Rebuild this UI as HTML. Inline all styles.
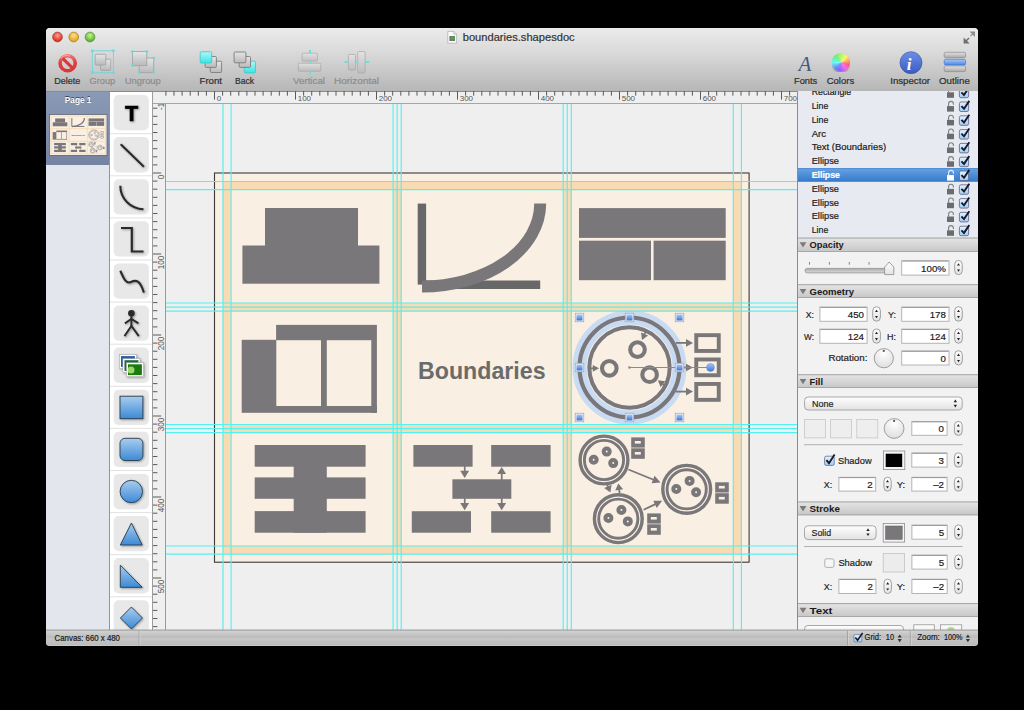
<!DOCTYPE html>
<html><head><meta charset="utf-8">
<style>
*{margin:0;padding:0;box-sizing:border-box}
html,body{width:1024px;height:710px;overflow:hidden;background:#000;font-family:"Liberation Sans",sans-serif}
.a{position:absolute}
#win{position:absolute;left:46px;top:28px;width:932px;height:618px;border-radius:4px 4px 4px 4px;overflow:hidden;background:#ececec}
#tb{position:absolute;left:0;top:0;width:932px;height:64px;background:linear-gradient(#ebebeb 0%,#d9d9d9 40%,#b6b6b6 100%);border-bottom:1px solid #8a8a8a}
.lbl{position:absolute;font-size:9.5px;color:#2a2a2a;white-space:nowrap;line-height:10px;text-shadow:0 1px 0 rgba(255,255,255,.45)}
.dis{color:#8a8a8a}
#side{position:absolute;left:0;top:64px;width:64px;height:538px;background:#e3e7ed}
#pagesel{position:absolute;left:0;top:0;width:64px;height:73px;background:linear-gradient(#8a9ab6,#7483a2)}
#tools{position:absolute;left:63px;top:64px;width:44px;height:538px;background:#fff;border-left:1px solid #8a95a8;border-right:1px solid #9c9c9c}
.tbtn{position:absolute;left:4px;width:35px;height:35px;border-radius:5px;background:#e8e8e8}
.tsep{position:absolute;left:0;width:42px;height:1px;background:#dedede}
#vr{position:absolute;left:107px;top:76px;width:13px;height:526px;background:#efefef;border-right:1px solid #9a9a9a}
#hr{position:absolute;left:107px;top:64px;width:644px;height:12px;background:#efefef;border-bottom:1px solid #a6a6a6}
#cv{position:absolute;left:120px;top:76px;width:631px;height:526px;background:#efefef;overflow:hidden}
#insp{position:absolute;left:751px;top:63px;width:181px;height:539px;background:#f1f1f1;border-left:1px solid #8f8f8f}
#status{position:absolute;left:0;top:602px;width:932px;height:16px;background:linear-gradient(#cfcfcf,#bcbcbc);border-top:1px solid #9a9a9a}
</style></head>
<body>
<div id="win">
  <div id="tb"></div>
  <div id="side"><div id="pagesel"></div></div>
  <div id="tools"></div>
  <div id="hr"></div>
  <div id="vr"></div>
</div>

<svg class="a" style="left:0;top:0" width="1024" height="710" viewBox="0 0 1024 710">
<defs>
<linearGradient id="bl" x1="0" y1="0" x2="0" y2="1"><stop offset="0" stop-color="#a9cdee"/><stop offset="1" stop-color="#3c8ad6"/></linearGradient>
<filter id="sh" x="-30%" y="-30%" width="160%" height="160%"><feGaussianBlur in="SourceAlpha" stdDeviation="0.9"/><feOffset dx="1" dy="1.2"/><feComponentTransfer><feFuncA type="linear" slope="0.35"/></feComponentTransfer><feMerge><feMergeNode/><feMergeNode in="SourceGraphic"/></feMerge></filter>
<clipPath id="toolclip"><rect x="110" y="91" width="42" height="539"/></clipPath>
<clipPath id="vrclip"><rect x="153" y="104" width="12" height="526"/></clipPath>
<clipPath id="hrclip"><rect x="165" y="91" width="632" height="13"/></clipPath>
</defs>
<g clip-path="url(#toolclip)">
<rect x="113.7" y="95.0" width="35.2" height="35.3" rx="5" fill="#e8e8e8"/>
<rect x="113.7" y="137.1" width="35.2" height="35.3" rx="5" fill="#e8e8e8"/>
<rect x="110" y="133.2" width="42" height="1" fill="#e2e2e2"/>
<rect x="113.7" y="179.2" width="35.2" height="35.3" rx="5" fill="#e8e8e8"/>
<rect x="110" y="175.3" width="42" height="1" fill="#e2e2e2"/>
<rect x="113.7" y="221.3" width="35.2" height="35.3" rx="5" fill="#e8e8e8"/>
<rect x="110" y="217.4" width="42" height="1" fill="#e2e2e2"/>
<rect x="113.7" y="263.4" width="35.2" height="35.3" rx="5" fill="#e8e8e8"/>
<rect x="110" y="259.5" width="42" height="1" fill="#e2e2e2"/>
<rect x="113.7" y="305.5" width="35.2" height="35.3" rx="5" fill="#e8e8e8"/>
<rect x="110" y="301.6" width="42" height="1" fill="#e2e2e2"/>
<rect x="113.7" y="347.6" width="35.2" height="35.3" rx="5" fill="#e8e8e8"/>
<rect x="110" y="343.7" width="42" height="1" fill="#e2e2e2"/>
<rect x="113.7" y="389.7" width="35.2" height="35.3" rx="5" fill="#e8e8e8"/>
<rect x="110" y="385.8" width="42" height="1" fill="#e2e2e2"/>
<rect x="113.7" y="431.8" width="35.2" height="35.3" rx="5" fill="#e8e8e8"/>
<rect x="110" y="427.9" width="42" height="1" fill="#e2e2e2"/>
<rect x="113.7" y="473.9" width="35.2" height="35.3" rx="5" fill="#e8e8e8"/>
<rect x="110" y="470.0" width="42" height="1" fill="#e2e2e2"/>
<rect x="113.7" y="516.0" width="35.2" height="35.3" rx="5" fill="#e8e8e8"/>
<rect x="110" y="512.1" width="42" height="1" fill="#e2e2e2"/>
<rect x="113.7" y="558.1" width="35.2" height="35.3" rx="5" fill="#e8e8e8"/>
<rect x="110" y="554.2" width="42" height="1" fill="#e2e2e2"/>
<rect x="113.7" y="600.2" width="35.2" height="35.3" rx="5" fill="#e8e8e8"/>
<rect x="110" y="596.3" width="42" height="1" fill="#e2e2e2"/>
<g filter="url(#sh)">
<text x="131.6" y="121.4" text-anchor="middle" font-family="Liberation Sans" font-weight="bold" font-size="21.5" fill="#000" stroke="#000" stroke-width="0.7">T</text>
<line x1="120.7" y1="144.2" x2="143.9" y2="166.8" stroke="#2b2b2b" stroke-width="2.1"/>
<path d="M120.3 185.8 A23.2 23.4 0 0 0 143.5 209.2" fill="none" stroke="#2b2b2b" stroke-width="2.1"/>
<path d="M121 228 L131.8 228 L131.8 251.5 L143.5 251.5" fill="none" stroke="#2b2b2b" stroke-width="2.2"/>
<path d="M120.3 270.8 C123.5 278, 126 284.5, 131 282 C136 279.5, 140 280, 143.9 292.6" fill="none" stroke="#2b2b2b" stroke-width="2.1"/>
<g stroke="#2b2b2b" stroke-width="1.9" fill="none"><line x1="131.4" y1="315" x2="131.4" y2="326"/><path d="M124.9 323.4 L131.4 319 L138.4 323.4"/><path d="M124.5 336.1 L131.4 326 L138.8 336.1"/></g><circle cx="131.4" cy="313.3" r="3.3" fill="#2b2b2b"/>
</g>
<g filter="url(#sh)">
<rect x="119.4" y="354.5" width="17.1" height="14" fill="#fff" stroke="#999" stroke-width="0.5"/>
<rect x="121.0" y="356.1" width="13.9" height="10.8" fill="#2a5ab0"/>
<rect x="122.9" y="358.6" width="17.1" height="14" fill="#fff" stroke="#999" stroke-width="0.5"/>
<rect x="124.5" y="360.2" width="13.9" height="10.8" fill="#1a6a3a"/>
<rect x="126.4" y="362.7" width="17.1" height="14" fill="#fff" stroke="#999" stroke-width="0.5"/>
<rect x="128.0" y="364.3" width="13.9" height="10.8" fill="#1a7a10"/>
<circle cx="131" cy="370" r="3.5" fill="#b8f080" opacity="0.8"/>
</g>
<rect x="120" y="396.2" width="22.9" height="22.5" stroke="#2a3a4a" stroke-width="0.9" fill="url(#bl)" filter="url(#sh)"/>
<rect x="120" y="438.3" width="22.9" height="22.2" rx="5" stroke="#2a3a4a" stroke-width="0.9" fill="url(#bl)" filter="url(#sh)"/>
<circle cx="131.3" cy="491.5" r="11.2" stroke="#2a3a4a" stroke-width="0.9" fill="url(#bl)" filter="url(#sh)"/>
<polygon points="131.4,523 142.2,545 120.3,545" stroke="#2a3a4a" stroke-width="0.9" fill="url(#bl)" filter="url(#sh)"/>
<polygon points="120.3,565.1 142.2,587.3 120.3,587.3" stroke="#2a3a4a" stroke-width="0.9" fill="url(#bl)" filter="url(#sh)"/>
<polygon points="131.4,607 142.4,618 131.4,629 120.4,618" stroke="#2a3a4a" stroke-width="0.9" fill="url(#bl)" filter="url(#sh)"/>
</g>
<g clip-path="url(#vrclip)">
<rect x="153" y="75.3" width="4.4" height="1" fill="#5a5a5a"/>
<rect x="153" y="83.4" width="4.4" height="1" fill="#5a5a5a"/>
<rect x="153" y="91.5" width="8.2" height="1" fill="#5a5a5a"/>
<rect x="153" y="99.6" width="4.4" height="1" fill="#5a5a5a"/>
<rect x="153" y="107.7" width="4.4" height="1" fill="#5a5a5a"/>
<rect x="153" y="115.8" width="4.4" height="1" fill="#5a5a5a"/>
<rect x="153" y="123.9" width="4.4" height="1" fill="#5a5a5a"/>
<rect x="153" y="132.0" width="4.4" height="1" fill="#5a5a5a"/>
<rect x="153" y="140.1" width="4.4" height="1" fill="#5a5a5a"/>
<rect x="153" y="148.2" width="4.4" height="1" fill="#5a5a5a"/>
<rect x="153" y="156.3" width="4.4" height="1" fill="#5a5a5a"/>
<rect x="153" y="164.4" width="4.4" height="1" fill="#5a5a5a"/>
<rect x="153" y="172.5" width="8.2" height="1" fill="#5a5a5a"/>
<rect x="153" y="180.6" width="4.4" height="1" fill="#5a5a5a"/>
<rect x="153" y="188.7" width="4.4" height="1" fill="#5a5a5a"/>
<rect x="153" y="196.8" width="4.4" height="1" fill="#5a5a5a"/>
<rect x="153" y="204.9" width="4.4" height="1" fill="#5a5a5a"/>
<rect x="153" y="213.0" width="4.4" height="1" fill="#5a5a5a"/>
<rect x="153" y="221.1" width="4.4" height="1" fill="#5a5a5a"/>
<rect x="153" y="229.2" width="4.4" height="1" fill="#5a5a5a"/>
<rect x="153" y="237.3" width="4.4" height="1" fill="#5a5a5a"/>
<rect x="153" y="245.4" width="4.4" height="1" fill="#5a5a5a"/>
<rect x="153" y="253.5" width="8.2" height="1" fill="#5a5a5a"/>
<rect x="153" y="261.6" width="4.4" height="1" fill="#5a5a5a"/>
<rect x="153" y="269.7" width="4.4" height="1" fill="#5a5a5a"/>
<rect x="153" y="277.8" width="4.4" height="1" fill="#5a5a5a"/>
<rect x="153" y="285.9" width="4.4" height="1" fill="#5a5a5a"/>
<rect x="153" y="294.0" width="4.4" height="1" fill="#5a5a5a"/>
<rect x="153" y="302.1" width="4.4" height="1" fill="#5a5a5a"/>
<rect x="153" y="310.2" width="4.4" height="1" fill="#5a5a5a"/>
<rect x="153" y="318.3" width="4.4" height="1" fill="#5a5a5a"/>
<rect x="153" y="326.4" width="4.4" height="1" fill="#5a5a5a"/>
<rect x="153" y="334.5" width="8.2" height="1" fill="#5a5a5a"/>
<rect x="153" y="342.6" width="4.4" height="1" fill="#5a5a5a"/>
<rect x="153" y="350.7" width="4.4" height="1" fill="#5a5a5a"/>
<rect x="153" y="358.8" width="4.4" height="1" fill="#5a5a5a"/>
<rect x="153" y="366.9" width="4.4" height="1" fill="#5a5a5a"/>
<rect x="153" y="375.0" width="4.4" height="1" fill="#5a5a5a"/>
<rect x="153" y="383.1" width="4.4" height="1" fill="#5a5a5a"/>
<rect x="153" y="391.2" width="4.4" height="1" fill="#5a5a5a"/>
<rect x="153" y="399.3" width="4.4" height="1" fill="#5a5a5a"/>
<rect x="153" y="407.4" width="4.4" height="1" fill="#5a5a5a"/>
<rect x="153" y="415.5" width="8.2" height="1" fill="#5a5a5a"/>
<rect x="153" y="423.6" width="4.4" height="1" fill="#5a5a5a"/>
<rect x="153" y="431.7" width="4.4" height="1" fill="#5a5a5a"/>
<rect x="153" y="439.8" width="4.4" height="1" fill="#5a5a5a"/>
<rect x="153" y="447.9" width="4.4" height="1" fill="#5a5a5a"/>
<rect x="153" y="456.0" width="4.4" height="1" fill="#5a5a5a"/>
<rect x="153" y="464.1" width="4.4" height="1" fill="#5a5a5a"/>
<rect x="153" y="472.2" width="4.4" height="1" fill="#5a5a5a"/>
<rect x="153" y="480.3" width="4.4" height="1" fill="#5a5a5a"/>
<rect x="153" y="488.4" width="4.4" height="1" fill="#5a5a5a"/>
<rect x="153" y="496.5" width="8.2" height="1" fill="#5a5a5a"/>
<rect x="153" y="504.6" width="4.4" height="1" fill="#5a5a5a"/>
<rect x="153" y="512.7" width="4.4" height="1" fill="#5a5a5a"/>
<rect x="153" y="520.8" width="4.4" height="1" fill="#5a5a5a"/>
<rect x="153" y="528.9" width="4.4" height="1" fill="#5a5a5a"/>
<rect x="153" y="537.0" width="4.4" height="1" fill="#5a5a5a"/>
<rect x="153" y="545.1" width="4.4" height="1" fill="#5a5a5a"/>
<rect x="153" y="553.2" width="4.4" height="1" fill="#5a5a5a"/>
<rect x="153" y="561.3" width="4.4" height="1" fill="#5a5a5a"/>
<rect x="153" y="569.4" width="4.4" height="1" fill="#5a5a5a"/>
<rect x="153" y="577.5" width="8.2" height="1" fill="#5a5a5a"/>
<rect x="153" y="585.6" width="4.4" height="1" fill="#5a5a5a"/>
<rect x="153" y="593.7" width="4.4" height="1" fill="#5a5a5a"/>
<rect x="153" y="601.8" width="4.4" height="1" fill="#5a5a5a"/>
<rect x="153" y="609.9" width="4.4" height="1" fill="#5a5a5a"/>
<rect x="153" y="618.0" width="4.4" height="1" fill="#5a5a5a"/>
<rect x="153" y="626.1" width="4.4" height="1" fill="#5a5a5a"/>
<rect x="153" y="634.2" width="4.4" height="1" fill="#5a5a5a"/>
<rect x="153" y="642.3" width="4.4" height="1" fill="#5a5a5a"/>
<rect x="153" y="650.4" width="4.4" height="1" fill="#5a5a5a"/>
<text transform="translate(164.3,93.6) rotate(-90)" text-anchor="end" font-family="Liberation Sans" font-size="8.2" fill="#555">-100</text>
<text transform="translate(164.3,174.6) rotate(-90)" text-anchor="end" font-family="Liberation Sans" font-size="8.2" fill="#555">0</text>
<text transform="translate(164.3,255.6) rotate(-90)" text-anchor="end" font-family="Liberation Sans" font-size="8.2" fill="#555">100</text>
<text transform="translate(164.3,336.6) rotate(-90)" text-anchor="end" font-family="Liberation Sans" font-size="8.2" fill="#555">200</text>
<text transform="translate(164.3,417.6) rotate(-90)" text-anchor="end" font-family="Liberation Sans" font-size="8.2" fill="#555">300</text>
<text transform="translate(164.3,498.6) rotate(-90)" text-anchor="end" font-family="Liberation Sans" font-size="8.2" fill="#555">400</text>
<text transform="translate(164.3,579.6) rotate(-90)" text-anchor="end" font-family="Liberation Sans" font-size="8.2" fill="#555">500</text>
</g>
<g clip-path="url(#hrclip)">
<rect x="149.2" y="91" width="1" height="4.7" fill="#5a5a5a"/>
<rect x="157.3" y="91" width="1" height="4.7" fill="#5a5a5a"/>
<rect x="165.4" y="91" width="1" height="4.7" fill="#5a5a5a"/>
<rect x="173.5" y="91" width="1" height="4.7" fill="#5a5a5a"/>
<rect x="181.6" y="91" width="1" height="4.7" fill="#5a5a5a"/>
<rect x="189.7" y="91" width="1" height="4.7" fill="#5a5a5a"/>
<rect x="197.8" y="91" width="1" height="4.7" fill="#5a5a5a"/>
<rect x="205.9" y="91" width="1" height="4.7" fill="#5a5a5a"/>
<rect x="214.0" y="91" width="1" height="8.6" fill="#5a5a5a"/>
<text x="216.7" y="101.4" font-family="Liberation Sans" font-size="8" fill="#555">0</text>
<rect x="222.1" y="91" width="1" height="4.7" fill="#5a5a5a"/>
<rect x="230.2" y="91" width="1" height="4.7" fill="#5a5a5a"/>
<rect x="238.3" y="91" width="1" height="4.7" fill="#5a5a5a"/>
<rect x="246.4" y="91" width="1" height="4.7" fill="#5a5a5a"/>
<rect x="254.5" y="91" width="1" height="4.7" fill="#5a5a5a"/>
<rect x="262.6" y="91" width="1" height="4.7" fill="#5a5a5a"/>
<rect x="270.7" y="91" width="1" height="4.7" fill="#5a5a5a"/>
<rect x="278.8" y="91" width="1" height="4.7" fill="#5a5a5a"/>
<rect x="286.9" y="91" width="1" height="4.7" fill="#5a5a5a"/>
<rect x="295.0" y="91" width="1" height="8.6" fill="#5a5a5a"/>
<text x="297.7" y="101.4" font-family="Liberation Sans" font-size="8" fill="#555">100</text>
<rect x="303.1" y="91" width="1" height="4.7" fill="#5a5a5a"/>
<rect x="311.2" y="91" width="1" height="4.7" fill="#5a5a5a"/>
<rect x="319.3" y="91" width="1" height="4.7" fill="#5a5a5a"/>
<rect x="327.4" y="91" width="1" height="4.7" fill="#5a5a5a"/>
<rect x="335.5" y="91" width="1" height="4.7" fill="#5a5a5a"/>
<rect x="343.6" y="91" width="1" height="4.7" fill="#5a5a5a"/>
<rect x="351.7" y="91" width="1" height="4.7" fill="#5a5a5a"/>
<rect x="359.8" y="91" width="1" height="4.7" fill="#5a5a5a"/>
<rect x="367.9" y="91" width="1" height="4.7" fill="#5a5a5a"/>
<rect x="376.0" y="91" width="1" height="8.6" fill="#5a5a5a"/>
<text x="378.7" y="101.4" font-family="Liberation Sans" font-size="8" fill="#555">200</text>
<rect x="384.1" y="91" width="1" height="4.7" fill="#5a5a5a"/>
<rect x="392.2" y="91" width="1" height="4.7" fill="#5a5a5a"/>
<rect x="400.3" y="91" width="1" height="4.7" fill="#5a5a5a"/>
<rect x="408.4" y="91" width="1" height="4.7" fill="#5a5a5a"/>
<rect x="416.5" y="91" width="1" height="4.7" fill="#5a5a5a"/>
<rect x="424.6" y="91" width="1" height="4.7" fill="#5a5a5a"/>
<rect x="432.7" y="91" width="1" height="4.7" fill="#5a5a5a"/>
<rect x="440.8" y="91" width="1" height="4.7" fill="#5a5a5a"/>
<rect x="448.9" y="91" width="1" height="4.7" fill="#5a5a5a"/>
<rect x="457.0" y="91" width="1" height="8.6" fill="#5a5a5a"/>
<text x="459.7" y="101.4" font-family="Liberation Sans" font-size="8" fill="#555">300</text>
<rect x="465.1" y="91" width="1" height="4.7" fill="#5a5a5a"/>
<rect x="473.2" y="91" width="1" height="4.7" fill="#5a5a5a"/>
<rect x="481.3" y="91" width="1" height="4.7" fill="#5a5a5a"/>
<rect x="489.4" y="91" width="1" height="4.7" fill="#5a5a5a"/>
<rect x="497.5" y="91" width="1" height="4.7" fill="#5a5a5a"/>
<rect x="505.6" y="91" width="1" height="4.7" fill="#5a5a5a"/>
<rect x="513.7" y="91" width="1" height="4.7" fill="#5a5a5a"/>
<rect x="521.8" y="91" width="1" height="4.7" fill="#5a5a5a"/>
<rect x="529.9" y="91" width="1" height="4.7" fill="#5a5a5a"/>
<rect x="538.0" y="91" width="1" height="8.6" fill="#5a5a5a"/>
<text x="540.7" y="101.4" font-family="Liberation Sans" font-size="8" fill="#555">400</text>
<rect x="546.1" y="91" width="1" height="4.7" fill="#5a5a5a"/>
<rect x="554.2" y="91" width="1" height="4.7" fill="#5a5a5a"/>
<rect x="562.3" y="91" width="1" height="4.7" fill="#5a5a5a"/>
<rect x="570.4" y="91" width="1" height="4.7" fill="#5a5a5a"/>
<rect x="578.5" y="91" width="1" height="4.7" fill="#5a5a5a"/>
<rect x="586.6" y="91" width="1" height="4.7" fill="#5a5a5a"/>
<rect x="594.7" y="91" width="1" height="4.7" fill="#5a5a5a"/>
<rect x="602.8" y="91" width="1" height="4.7" fill="#5a5a5a"/>
<rect x="610.9" y="91" width="1" height="4.7" fill="#5a5a5a"/>
<rect x="619.0" y="91" width="1" height="8.6" fill="#5a5a5a"/>
<text x="621.7" y="101.4" font-family="Liberation Sans" font-size="8" fill="#555">500</text>
<rect x="627.1" y="91" width="1" height="4.7" fill="#5a5a5a"/>
<rect x="635.2" y="91" width="1" height="4.7" fill="#5a5a5a"/>
<rect x="643.3" y="91" width="1" height="4.7" fill="#5a5a5a"/>
<rect x="651.4" y="91" width="1" height="4.7" fill="#5a5a5a"/>
<rect x="659.5" y="91" width="1" height="4.7" fill="#5a5a5a"/>
<rect x="667.6" y="91" width="1" height="4.7" fill="#5a5a5a"/>
<rect x="675.7" y="91" width="1" height="4.7" fill="#5a5a5a"/>
<rect x="683.8" y="91" width="1" height="4.7" fill="#5a5a5a"/>
<rect x="691.9" y="91" width="1" height="4.7" fill="#5a5a5a"/>
<rect x="700.0" y="91" width="1" height="8.6" fill="#5a5a5a"/>
<text x="702.7" y="101.4" font-family="Liberation Sans" font-size="8" fill="#555">600</text>
<rect x="708.1" y="91" width="1" height="4.7" fill="#5a5a5a"/>
<rect x="716.2" y="91" width="1" height="4.7" fill="#5a5a5a"/>
<rect x="724.3" y="91" width="1" height="4.7" fill="#5a5a5a"/>
<rect x="732.4" y="91" width="1" height="4.7" fill="#5a5a5a"/>
<rect x="740.5" y="91" width="1" height="4.7" fill="#5a5a5a"/>
<rect x="748.6" y="91" width="1" height="4.7" fill="#5a5a5a"/>
<rect x="756.7" y="91" width="1" height="4.7" fill="#5a5a5a"/>
<rect x="764.8" y="91" width="1" height="4.7" fill="#5a5a5a"/>
<rect x="772.9" y="91" width="1" height="4.7" fill="#5a5a5a"/>
<rect x="781.0" y="91" width="1" height="8.6" fill="#5a5a5a"/>
<text x="783.7" y="101.4" font-family="Liberation Sans" font-size="8" fill="#555">700</text>
<rect x="789.1" y="91" width="1" height="4.7" fill="#5a5a5a"/>
<rect x="797.2" y="91" width="1" height="4.7" fill="#5a5a5a"/>
<rect x="805.3" y="91" width="1" height="4.7" fill="#5a5a5a"/>
<rect x="813.4" y="91" width="1" height="4.7" fill="#5a5a5a"/>
<rect x="821.5" y="91" width="1" height="4.7" fill="#5a5a5a"/>
<rect x="829.6" y="91" width="1" height="4.7" fill="#5a5a5a"/>
<rect x="837.7" y="91" width="1" height="4.7" fill="#5a5a5a"/>
<rect x="845.8" y="91" width="1" height="4.7" fill="#5a5a5a"/>
<rect x="853.9" y="91" width="1" height="4.7" fill="#5a5a5a"/>
</g>
</svg>
<svg class="a" style="left:0;top:0" width="1024" height="710" viewBox="0 0 1024 710">
<defs><clipPath id="cc"><rect x="166" y="104" width="631" height="526"/></clipPath><linearGradient id="hb" x1="0" y1="0" x2="0" y2="1"><stop offset="0" stop-color="#a9c8f6"/><stop offset="1" stop-color="#3b74d8"/></linearGradient></defs>
<rect x="166" y="104" width="631" height="526" fill="#efefef"/>
<g clip-path="url(#cc)">
<g id="doc"><rect x="214.50" y="173.00" width="534.60" height="389.20" fill="#f9efe2" stroke="#3a3a3a" stroke-width="1.1"/>
<rect x="223.00" y="181.50" width="518.40" height="372.60" fill="#f8dab3"/>
<rect x="231.10" y="189.60" width="162.00" height="113.40" fill="#f9efe2"/>
<rect x="231.10" y="311.10" width="162.00" height="113.40" fill="#f9efe2"/>
<rect x="231.10" y="432.60" width="162.00" height="113.40" fill="#f9efe2"/>
<rect x="401.20" y="189.60" width="162.00" height="113.40" fill="#f9efe2"/>
<rect x="401.20" y="311.10" width="162.00" height="113.40" fill="#f9efe2"/>
<rect x="401.20" y="432.60" width="162.00" height="113.40" fill="#f9efe2"/>
<rect x="571.30" y="189.60" width="162.00" height="113.40" fill="#f9efe2"/>
<rect x="571.30" y="311.10" width="162.00" height="113.40" fill="#f9efe2"/>
<rect x="571.30" y="432.60" width="162.00" height="113.40" fill="#f9efe2"/>
<g fill="#7a777a">
<!-- cell1 -->
<rect x="265" y="208" width="93" height="38"/>
<rect x="242.4" y="245.5" width="137" height="38.2"/>
<!-- cell3 -->
<rect x="579" y="208.1" width="146.7" height="29.8"/>
<rect x="579" y="240.7" width="72" height="39.5"/>
<rect x="653.6" y="240.7" width="72.1" height="39.5"/>
<!-- cell4 -->
<rect x="276.1" y="324.9" width="100.8" height="15.3"/>
<rect x="241.7" y="339.8" width="34.6" height="73"/>
<rect x="371.3" y="340" width="5.6" height="72.8"/>
<rect x="276" y="406" width="101" height="6.8"/>
<rect x="321" y="340" width="5.8" height="66.2"/>
<!-- cell7 -->
<rect x="254.7" y="445" width="110.9" height="21.7"/>
<rect x="254.7" y="477.4" width="110.9" height="21.4"/>
<rect x="254.7" y="511.1" width="110.9" height="21.6"/>
<rect x="293.7" y="445" width="33.1" height="87.7"/>
<!-- cell8 -->
<rect x="413.4" y="445" width="59.2" height="21.7"/>
<rect x="491.2" y="445" width="59.4" height="21.7"/>
<rect x="452.4" y="479.3" width="58.9" height="19.5"/>
<rect x="411.8" y="511.2" width="59.2" height="21.5"/>
<rect x="491.2" y="511.2" width="59.4" height="21.5"/>
<rect x="463.9" y="466" width="1.7" height="6"/>
<polygon points="460.2,470.8 469.1,470.8 464.7,478.1"/>
<rect x="500.9" y="473" width="1.7" height="7"/>
<polygon points="497.2,474 506.1,474 501.7,467"/>
<rect x="463.9" y="498" width="1.7" height="6"/>
<polygon points="460.2,503 469.1,503 464.7,510.3"/>
<rect x="500.9" y="498" width="1.7" height="6"/>
<polygon points="497.2,503 506.1,503 501.7,510.3"/>
</g>
<!-- cell2 -->
<rect x="417.7" y="203.6" width="8.4" height="81" fill="#686868"/>
<rect x="422" y="280.5" width="118.2" height="8.5" fill="#686868"/>
<path d="M540.2 203.6 A118.2 82.9 0 0 1 422 286.5" fill="none" stroke="#7a777a" stroke-width="12"/>
<!-- cell5 -->
<text x="418" y="378.8" font-family="Liberation Sans" font-weight="bold" font-size="23.2" fill="#6b6b6b">Boundaries</text>
</g>
<circle cx="629.5" cy="367.5" r="50" fill="none" stroke="#c8dbf2" stroke-width="14"/>
<g id="doc2"><circle cx="629.5" cy="367.5" r="50" fill="none" stroke="#7a777a" stroke-width="4.2"/>
<circle cx="629.5" cy="367.5" r="40.2" fill="#f9efe2" stroke="#7a777a" stroke-width="4"/>
<circle cx="637.5" cy="349.6" r="7.3" fill="none" stroke="#7a777a" stroke-width="4.1"/>
<circle cx="609.3" cy="368.3" r="7.3" fill="none" stroke="#7a777a" stroke-width="4.1"/>
<circle cx="649.6" cy="374.7" r="7.3" fill="none" stroke="#7a777a" stroke-width="4.1"/>
<line x1="590.80" y1="368.30" x2="593.30" y2="368.30" stroke="#7a777a" stroke-width="1.8"/><polygon fill="#7a777a" points="599.00,368.30 592.80,371.70 592.80,364.90"/>
<line x1="646.50" y1="329.50" x2="644.36" y2="334.49" stroke="#7a777a" stroke-width="1.8"/><polygon fill="#7a777a" points="642.00,340.00 641.07,332.53 648.05,335.52"/>
<line x1="664.50" y1="385.50" x2="662.58" y2="383.96" stroke="#7a777a" stroke-width="1.8"/><polygon fill="#7a777a" points="657.90,380.20 665.35,381.31 660.59,387.23"/>
<rect x="696.25" y="335.15" width="22.5" height="15.80" fill="none" stroke="#7a777a" stroke-width="3.9"/>
<rect x="696.25" y="359.45" width="22.5" height="15.80" fill="none" stroke="#7a777a" stroke-width="3.9"/>
<rect x="696.25" y="383.95" width="22.5" height="15.90" fill="none" stroke="#7a777a" stroke-width="3.9"/>
<line x1="675.80" y1="342.90" x2="686.50" y2="342.90" stroke="#7a777a" stroke-width="1.8"/><polygon fill="#7a777a" points="693.00,342.90 686.00,346.70 686.00,339.10"/>
<line x1="675.80" y1="367.50" x2="686.50" y2="367.50" stroke="#7a777a" stroke-width="1.8"/><polygon fill="#7a777a" points="693.00,367.50 686.00,371.30 686.00,363.70"/>
<line x1="675.80" y1="391.60" x2="686.50" y2="391.60" stroke="#7a777a" stroke-width="1.8"/><polygon fill="#7a777a" points="693.00,391.60 686.00,395.40 686.00,387.80"/>
<circle cx="604" cy="460" r="23.9" fill="none" stroke="#7a777a" stroke-width="3.4"/><circle cx="604" cy="460" r="19.6" fill="none" stroke="#7a777a" stroke-width="2.9"/><circle cx="606.7" cy="451.6" r="3.0" fill="none" stroke="#7a777a" stroke-width="4.0"/><circle cx="593.7" cy="459.7" r="3.0" fill="none" stroke="#7a777a" stroke-width="4.0"/><circle cx="613.2" cy="463.1" r="3.0" fill="none" stroke="#7a777a" stroke-width="4.0"/><rect x="631.2" y="437.4" width="13.6" height="10.2" fill="#7a777a"/><rect x="631.2" y="448.3" width="13.6" height="10.5" fill="#7a777a"/><rect x="634.8" y="441.0" width="6" height="2.6" fill="#f9efe2"/><rect x="634.8" y="452.0" width="6" height="2.6" fill="#f9efe2"/>
<circle cx="686.7" cy="489.3" r="23.9" fill="none" stroke="#7a777a" stroke-width="3.4"/><circle cx="686.7" cy="489.3" r="19.6" fill="none" stroke="#7a777a" stroke-width="2.9"/><circle cx="689.6" cy="480.9" r="3.0" fill="none" stroke="#7a777a" stroke-width="4.0"/><circle cx="676.3" cy="489" r="3.0" fill="none" stroke="#7a777a" stroke-width="4.0"/><circle cx="696.1" cy="492.2" r="3.0" fill="none" stroke="#7a777a" stroke-width="4.0"/><rect x="715.2" y="482.3" width="13.6" height="10.2" fill="#7a777a"/><rect x="715.2" y="493.2" width="13.6" height="10.5" fill="#7a777a"/><rect x="718.8" y="485.9" width="6" height="2.6" fill="#f9efe2"/><rect x="718.8" y="496.9" width="6" height="2.6" fill="#f9efe2"/>
<circle cx="618.3" cy="518.7" r="23.9" fill="none" stroke="#7a777a" stroke-width="3.4"/><circle cx="618.3" cy="518.7" r="19.6" fill="none" stroke="#7a777a" stroke-width="2.9"/><circle cx="621.4" cy="510" r="3.0" fill="none" stroke="#7a777a" stroke-width="4.0"/><circle cx="608.4" cy="518" r="3.0" fill="none" stroke="#7a777a" stroke-width="4.0"/><circle cx="627.8" cy="521.4" r="3.0" fill="none" stroke="#7a777a" stroke-width="4.0"/><rect x="647.2" y="513.4" width="13.6" height="10.2" fill="#7a777a"/><rect x="647.2" y="524.3" width="13.6" height="10.5" fill="#7a777a"/><rect x="650.8" y="517.0" width="6" height="2.6" fill="#f9efe2"/><rect x="650.8" y="528.0" width="6" height="2.6" fill="#f9efe2"/>
<line x1="628.40" y1="469.50" x2="653.56" y2="479.77" stroke="#7a777a" stroke-width="1.8"/><polygon fill="#7a777a" points="660.50,482.60 651.58,483.28 654.60,475.87"/>
<line x1="643.60" y1="509.80" x2="655.45" y2="504.07" stroke="#7a777a" stroke-width="1.8"/><polygon fill="#7a777a" points="662.20,500.80 656.74,507.89 653.26,500.68"/>
<line x1="606.00" y1="482.00" x2="608.06" y2="486.87" stroke="#7a777a" stroke-width="1.8"/><polygon fill="#7a777a" points="610.40,492.40 604.18,487.97 611.55,484.86"/>
<line x1="619.60" y1="493.00" x2="619.11" y2="489.35" stroke="#7a777a" stroke-width="1.8"/><polygon fill="#7a777a" points="618.30,483.40 623.14,489.30 615.21,490.38"/></g>
<line x1="629.5" y1="367.5" x2="710.5" y2="367.5" stroke="#8a8a8a" stroke-width="1"/>
<circle cx="629.5" cy="367.5" r="1.3" fill="#8a8a8a"/>
<circle cx="710.5" cy="367.5" r="3.9" fill="url(#hb)" stroke="#6a8fd0" stroke-width="0.6"/>
<rect x="575.2" y="313.2" width="8.6" height="8.6" fill="#f2f2f2" stroke="#9a9a9a" stroke-width="0.6"/>
<rect x="576.5" y="314.5" width="6" height="6" fill="url(#hb)"/>
<rect x="575.2" y="363.2" width="8.6" height="8.6" fill="#f2f2f2" stroke="#9a9a9a" stroke-width="0.6"/>
<rect x="576.5" y="364.5" width="6" height="6" fill="url(#hb)"/>
<rect x="575.2" y="413.2" width="8.6" height="8.6" fill="#f2f2f2" stroke="#9a9a9a" stroke-width="0.6"/>
<rect x="576.5" y="414.5" width="6" height="6" fill="url(#hb)"/>
<rect x="625.2" y="313.2" width="8.6" height="8.6" fill="#f2f2f2" stroke="#9a9a9a" stroke-width="0.6"/>
<rect x="626.5" y="314.5" width="6" height="6" fill="url(#hb)"/>
<rect x="625.2" y="413.2" width="8.6" height="8.6" fill="#f2f2f2" stroke="#9a9a9a" stroke-width="0.6"/>
<rect x="626.5" y="414.5" width="6" height="6" fill="url(#hb)"/>
<rect x="675.2" y="313.2" width="8.6" height="8.6" fill="#f2f2f2" stroke="#9a9a9a" stroke-width="0.6"/>
<rect x="676.5" y="314.5" width="6" height="6" fill="url(#hb)"/>
<rect x="675.2" y="363.2" width="8.6" height="8.6" fill="#f2f2f2" stroke="#9a9a9a" stroke-width="0.6"/>
<rect x="676.5" y="364.5" width="6" height="6" fill="url(#hb)"/>
<rect x="675.2" y="413.2" width="8.6" height="8.6" fill="#f2f2f2" stroke="#9a9a9a" stroke-width="0.6"/>
<rect x="676.5" y="414.5" width="6" height="6" fill="url(#hb)"/>
<g stroke="#55f0f0" stroke-width="1.15"><line x1="223.00" y1="104" x2="223.00" y2="630"/>
<line x1="231.10" y1="104" x2="231.10" y2="630"/>
<line x1="393.10" y1="104" x2="393.10" y2="630"/>
<line x1="397.15" y1="104" x2="397.15" y2="630"/>
<line x1="401.20" y1="104" x2="401.20" y2="630"/>
<line x1="563.20" y1="104" x2="563.20" y2="630"/>
<line x1="567.25" y1="104" x2="567.25" y2="630"/>
<line x1="571.30" y1="104" x2="571.30" y2="630"/>
<line x1="733.30" y1="104" x2="733.30" y2="630"/>
<line x1="741.40" y1="104" x2="741.40" y2="630"/>
<line x1="166" y1="181.50" x2="797" y2="181.50"/>
<line x1="166" y1="189.60" x2="797" y2="189.60"/>
<line x1="166" y1="303.00" x2="797" y2="303.00"/>
<line x1="166" y1="307.05" x2="797" y2="307.05"/>
<line x1="166" y1="311.10" x2="797" y2="311.10"/>
<line x1="166" y1="424.50" x2="797" y2="424.50"/>
<line x1="166" y1="428.55" x2="797" y2="428.55"/>
<line x1="166" y1="432.60" x2="797" y2="432.60"/>
<line x1="166" y1="546.00" x2="797" y2="546.00"/>
<line x1="166" y1="554.10" x2="797" y2="554.10"/></g>
</g></svg>
<svg class="a" style="left:0;top:0" width="1024" height="710" viewBox="0 0 1024 710">
<text x="64.8" y="102.8" font-family="Liberation Sans" font-weight="bold" font-size="8.6" fill="#fff" textLength="26.6" lengthAdjust="spacingAndGlyphs" style="text-shadow:0 -0.5px 0.6px rgba(0,0,0,.55)">Page 1</text>
<rect x="49.6" y="114.6" width="57.2" height="40.6" fill="#f9efe2" stroke="#4c5a74" stroke-width="0.9"/>
<defs><filter id="thk" x="0" y="0" width="1" height="1" filterUnits="objectBoundingBox"><feMorphology operator="erode" radius="6"/></filter></defs><g transform="translate(49.8,114.8) scale(0.1063,0.1035) translate(-214.5,-173)"><use href="#doc"/><use href="#doc2"/></g>
</svg>

<svg class="a" style="left:0;top:0" width="1024" height="92" viewBox="0 0 1024 92">
<defs>
<linearGradient id="gq" x1="0" y1="0" x2="0" y2="1"><stop offset="0" stop-color="#e6e6e6"/><stop offset="1" stop-color="#b9b9b9"/></linearGradient>
<linearGradient id="cq" x1="0" y1="0" x2="0" y2="1"><stop offset="0" stop-color="#b4f6f6"/><stop offset="1" stop-color="#35e6e6"/></linearGradient>
<linearGradient id="red" x1="0" y1="0" x2="0" y2="1"><stop offset="0" stop-color="#f07070"/><stop offset="0.5" stop-color="#de3c3c"/><stop offset="1" stop-color="#d83838"/></linearGradient>
<radialGradient id="tl_r" cx="0.5" cy="0.35" r="0.6"><stop offset="0" stop-color="#ff9c8c"/><stop offset="1" stop-color="#d8281e"/></radialGradient>
<radialGradient id="tl_y" cx="0.5" cy="0.35" r="0.6"><stop offset="0" stop-color="#ffe08a"/><stop offset="1" stop-color="#e2a01c"/></radialGradient>
<radialGradient id="tl_g" cx="0.5" cy="0.35" r="0.6"><stop offset="0" stop-color="#c8f29a"/><stop offset="1" stop-color="#5aae2a"/></radialGradient>
<linearGradient id="ib" x1="0" y1="0" x2="0" y2="1"><stop offset="0" stop-color="#6c8fe8"/><stop offset="1" stop-color="#3a5cc0"/></linearGradient>
<linearGradient id="ob" x1="0" y1="0" x2="0" y2="1"><stop offset="0" stop-color="#e2e2e2"/><stop offset="1" stop-color="#a9a9a9"/></linearGradient>
<linearGradient id="obb" x1="0" y1="0" x2="0" y2="1"><stop offset="0" stop-color="#a8c8f8"/><stop offset="1" stop-color="#4a86e6"/></linearGradient>
</defs>
<!-- traffic lights -->
<circle cx="57.5" cy="37" r="4.9" fill="url(#tl_r)" stroke="#9a3a30" stroke-width="0.6"/>
<circle cx="73.7" cy="37" r="4.9" fill="url(#tl_y)" stroke="#a07020" stroke-width="0.6"/>
<circle cx="90" cy="37" r="4.9" fill="url(#tl_g)" stroke="#4a8a2a" stroke-width="0.6"/>
<!-- title -->
<path d="M447.8 31.4 L453.8 31.4 L456.6 34.2 L456.6 43.2 L447.8 43.2 Z" fill="#fafafa" stroke="#a0a0a0" stroke-width="0.6"/>
<path d="M453.8 31.4 L453.8 34.2 L456.6 34.2" fill="#e0e0e0" stroke="#a0a0a0" stroke-width="0.5"/>
<rect x="449.4" y="36" width="5.6" height="5" fill="#4a4a4a" opacity="0.75"/>
<circle cx="452.8" cy="38" r="1.9" fill="#3cb030"/>
<text x="462.7" y="40.9" font-family="Liberation Sans" font-size="11.15" fill="#333" stroke="#333" stroke-width="0.2" textLength="112" lengthAdjust="spacingAndGlyphs">boundaries.shapesdoc</text>
<!-- resize widget -->
<polygon points="963.6,43.4 963.6,37.4 969.6,43.4" fill="#6e6e6e"/><line x1="965.5" y1="41.5" x2="969" y2="38" stroke="#6e6e6e" stroke-width="1.4"/>
<polygon points="975,31.6 975,37 969.6,31.6" fill="#8a8a8a"/><line x1="973.3" y1="33.3" x2="970.5" y2="36.1" stroke="#8a8a8a" stroke-width="1.2"/>
<!-- delete -->
<circle cx="67.65" cy="63.25" r="7.6" fill="none" stroke="url(#red)" stroke-width="3.5"/>
<line x1="62.2" y1="57.8" x2="73.1" y2="68.7" stroke="#d83a3a" stroke-width="3.2"/>
<path d="M61 59 A7.6 7.6 0 0 1 70 56" fill="none" stroke="#ffb0b0" stroke-width="1.1" opacity="0.7"/>
<!-- group -->
<rect x="100.5" y="59.2" width="10.2" height="11.2" fill="url(#gq)" stroke="#a0a0a0" stroke-width="0.8" rx="0.8"/>
<rect x="95.2" y="54.3" width="10.6" height="10.8" fill="url(#gq)" stroke="#a0a0a0" stroke-width="0.8" rx="0.8"/>
<rect x="92.3" y="50.8" width="21.1" height="21.9" fill="none" stroke="#6ad8d8" stroke-width="0.9"/>
<g fill="#6ad8d8"><circle cx="92.3" cy="50.8" r="1.4"/><circle cx="113.4" cy="50.8" r="1.4"/><circle cx="92.3" cy="72.7" r="1.4"/><circle cx="113.4" cy="72.7" r="1.4"/></g>
<!-- ungroup -->
<rect x="139.2" y="58.1" width="14.6" height="14.6" fill="url(#gq)" stroke="#a0a0a0" stroke-width="0.8"/>
<rect x="132.5" y="51.6" width="14.3" height="14.1" fill="url(#gq)" stroke="#a0a0a0" stroke-width="0.8"/>
<g fill="#6ad8d8"><circle cx="132.5" cy="51.6" r="1.4"/><circle cx="146.8" cy="51.6" r="1.4"/><circle cx="132.5" cy="65.7" r="1.4"/><circle cx="153.8" cy="58.1" r="1.4"/><circle cx="139.2" cy="72.7" r="1.4"/><circle cx="153.8" cy="72.7" r="1.4"/></g>
<!-- front -->
<rect x="210.3" y="61.2" width="11.3" height="11.3" rx="1" fill="url(#gq)" stroke="#7c7c7c" stroke-width="0.9"/>
<rect x="205.2" y="56.5" width="11.2" height="10.9" rx="1" fill="url(#gq)" stroke="#7c7c7c" stroke-width="0.9"/>
<rect x="200.2" y="51.8" width="11.5" height="11.2" rx="1" fill="url(#cq)" stroke="#48c8c8" stroke-width="0.9"/>
<!-- back -->
<rect x="244.3" y="61.2" width="11.2" height="11.7" rx="1" fill="url(#cq)" stroke="#48c8c8" stroke-width="0.9"/>
<rect x="239.2" y="56.5" width="11.3" height="10.9" rx="1" fill="url(#gq)" stroke="#7c7c7c" stroke-width="0.9"/>
<rect x="234.1" y="52" width="11.8" height="10.8" rx="1" fill="url(#gq)" stroke="#7c7c7c" stroke-width="0.9"/>
<!-- vertical -->
<g stroke="#9e9e9e" stroke-width="0.8" fill="url(#gq)" opacity="0.75">
<rect x="302.1" y="53.2" width="15.3" height="7.9" rx="1"/>
<rect x="298.3" y="63.2" width="22.5" height="8" rx="1"/>
<rect x="348.4" y="54.4" width="7.1" height="15.8" rx="1"/>
<rect x="357.7" y="51.5" width="7.4" height="21.5" rx="1"/>
</g>
<g stroke="#6ae0e0" stroke-width="2">
<line x1="310" y1="50" x2="310" y2="53.2"/><line x1="310" y1="61.3" x2="310" y2="63.2"/><line x1="310" y1="71.3" x2="310" y2="74.8"/>
<line x1="344.5" y1="62" x2="348.3" y2="62"/><line x1="355.6" y1="62" x2="357.7" y2="62"/><line x1="365.2" y1="62" x2="369.1" y2="62"/>
</g>
<!-- fonts -->
<text x="798.5" y="71" font-family="Liberation Serif" font-style="italic" font-size="21" fill="#3f5a7e">A</text>
<!-- colors -->
<foreignObject x="831.8" y="53.4" width="18.4" height="18.4"><div style="width:18.4px;height:18.4px;border-radius:50%;background:conic-gradient(from 0deg,#a8f860,#f8f868 40deg,#ff9a58 80deg,#ff5a78 105deg,#f860f0 140deg,#9060f8 190deg,#6090f8 225deg,#60f8f8 270deg,#60f078 320deg,#a8f860 360deg);box-shadow:0 1px 1.5px rgba(0,0,0,.3)"><div style="width:100%;height:100%;border-radius:50%;background:radial-gradient(circle at 50% 45%,rgba(255,255,255,.25) 0,rgba(255,255,255,0) 60%)"></div></div></foreignObject>
<!-- inspector -->
<circle cx="911" cy="62.7" r="11" fill="url(#ib)" stroke="#34509a" stroke-width="0.6"/>
<text x="906.8" y="69.5" font-family="Liberation Serif" font-style="italic" font-weight="bold" font-size="17" fill="#fff">i</text>
<!-- outline -->
<rect x="944.2" y="52.3" width="21.4" height="5.4" rx="1.5" fill="url(#ob)" stroke="#8a8a8a" stroke-width="0.7"/>
<rect x="944.2" y="59.3" width="21.4" height="5.7" rx="1.5" fill="url(#obb)" stroke="#4a78c8" stroke-width="0.7"/>
<rect x="944.2" y="65.9" width="21.4" height="5.7" rx="1.5" fill="url(#ob)" stroke="#8a8a8a" stroke-width="0.7"/>
<!-- labels -->
<g font-family="Liberation Sans" font-size="9.5" text-anchor="middle" fill="#303030" stroke-width="0.22">
<text stroke="#303030" x="67.25" y="83.9" textLength="26.1" lengthAdjust="spacingAndGlyphs">Delete</text>
<text stroke="#8c8c8c" x="102.35" y="83.9" textLength="25.5" lengthAdjust="spacingAndGlyphs" fill="#8c8c8c">Group</text>
<text stroke="#8c8c8c" x="142.8" y="83.9" textLength="36" lengthAdjust="spacingAndGlyphs" fill="#8c8c8c">Ungroup</text>
<text stroke="#303030" x="210.75" y="83.9" textLength="22.5" lengthAdjust="spacingAndGlyphs">Front</text>
<text stroke="#303030" x="244.5" y="83.9" textLength="19" lengthAdjust="spacingAndGlyphs">Back</text>
<text stroke="#8c8c8c" x="309" y="83.9" textLength="32" lengthAdjust="spacingAndGlyphs" fill="#8c8c8c">Vertical</text>
<text stroke="#8c8c8c" x="356.5" y="83.9" textLength="45" lengthAdjust="spacingAndGlyphs" fill="#8c8c8c">Horizontal</text>
<text stroke="#303030" x="805.6" y="83.9" textLength="23.3" lengthAdjust="spacingAndGlyphs">Fonts</text>
<text stroke="#303030" x="840.4" y="83.9" textLength="27.5" lengthAdjust="spacingAndGlyphs">Colors</text>
<text stroke="#303030" x="910.1" y="83.9" textLength="39.8" lengthAdjust="spacingAndGlyphs">Inspector</text>
<text stroke="#303030" x="954.4" y="83.9" textLength="30.8" lengthAdjust="spacingAndGlyphs">Outline</text>
</g>
</svg>

<svg class="a" style="left:0;top:0" width="1024" height="710" viewBox="0 0 1024 710">
<defs>
<linearGradient id="hdr" x1="0" y1="0" x2="0" y2="1"><stop offset="0" stop-color="#e6e6e6"/><stop offset="1" stop-color="#c6c6c6"/></linearGradient>
<linearGradient id="selrow" x1="0" y1="0" x2="0" y2="1"><stop offset="0" stop-color="#66a3e3"/><stop offset="1" stop-color="#3479cb"/></linearGradient>
<linearGradient id="cbx" x1="0" y1="0" x2="0" y2="1"><stop offset="0" stop-color="#e6f2fc"/><stop offset="1" stop-color="#9fcdf4"/></linearGradient>
<linearGradient id="btn" x1="0" y1="0" x2="0" y2="1"><stop offset="0" stop-color="#ffffff"/><stop offset="1" stop-color="#e2e2e2"/></linearGradient>
<linearGradient id="trk" x1="0" y1="0" x2="0" y2="1"><stop offset="0" stop-color="#a8a8a8"/><stop offset="1" stop-color="#dcdcdc"/></linearGradient>
<radialGradient id="knob" cx="0.5" cy="0.25" r="0.8"><stop offset="0" stop-color="#ffffff"/><stop offset="1" stop-color="#dcdcdc"/></radialGradient>
<linearGradient id="stb" x1="0" y1="0" x2="0" y2="1"><stop offset="0" stop-color="#d4d4d4"/><stop offset="1" stop-color="#bababa"/></linearGradient>
<clipPath id="listclip"><rect x="798" y="91" width="180" height="147"/></clipPath>
</defs>
<rect x="797" y="91" width="181" height="539" fill="#f2f2f2"/>
<rect x="797" y="91" width="181" height="147" fill="#e7eaf0"/>
<rect x="797" y="91" width="1" height="539" fill="#8c8c8c"/>
<g clip-path="url(#listclip)">
<text x="811.7" y="95.2" font-family="Liberation Sans" font-size="9.5"  fill="#202020" stroke="#202020" stroke-width="0.2" textLength="39.5" lengthAdjust="spacingAndGlyphs">Rectangle</text>
<rect x="947" y="92.3" width="7" height="5.5" fill="#6c6c6c"/>
<path d="M948.6 92.3 L948.6 90.0 A2.4 2.4 0 0 1 953.4 90.0 L953.4 90.9" fill="none" stroke="#6c6c6c" stroke-width="1.1" opacity="0.85"/>
<rect x="959.4" y="88.2" width="9.2" height="9.5" rx="1.6" fill="url(#cbx)" stroke="#5f5f86" stroke-width="0.8"/>
<path d="M961.4 92.3 L964 94.9 L969.3 87.1" fill="none" stroke="#141c2c" stroke-width="1.9"/>
<text x="811.7" y="109.0" font-family="Liberation Sans" font-size="9.5"  fill="#202020" stroke="#202020" stroke-width="0.2" textLength="16.6" lengthAdjust="spacingAndGlyphs">Line</text>
<rect x="947" y="106.1" width="7" height="5.5" fill="#6c6c6c"/>
<path d="M948.6 106.1 L948.6 103.8 A2.4 2.4 0 0 1 953.4 103.8 L953.4 104.7" fill="none" stroke="#6c6c6c" stroke-width="1.1" opacity="0.85"/>
<rect x="959.4" y="102.0" width="9.2" height="9.5" rx="1.6" fill="url(#cbx)" stroke="#5f5f86" stroke-width="0.8"/>
<path d="M961.4 106.1 L964 108.7 L969.3 100.9" fill="none" stroke="#141c2c" stroke-width="1.9"/>
<text x="811.7" y="122.8" font-family="Liberation Sans" font-size="9.5"  fill="#202020" stroke="#202020" stroke-width="0.2" textLength="16.6" lengthAdjust="spacingAndGlyphs">Line</text>
<rect x="947" y="119.9" width="7" height="5.5" fill="#6c6c6c"/>
<path d="M948.6 119.9 L948.6 117.6 A2.4 2.4 0 0 1 953.4 117.6 L953.4 118.5" fill="none" stroke="#6c6c6c" stroke-width="1.1" opacity="0.85"/>
<rect x="959.4" y="115.8" width="9.2" height="9.5" rx="1.6" fill="url(#cbx)" stroke="#5f5f86" stroke-width="0.8"/>
<path d="M961.4 119.9 L964 122.5 L969.3 114.7" fill="none" stroke="#141c2c" stroke-width="1.9"/>
<text x="811.7" y="136.6" font-family="Liberation Sans" font-size="9.5"  fill="#202020" stroke="#202020" stroke-width="0.2" textLength="14.4" lengthAdjust="spacingAndGlyphs">Arc</text>
<rect x="947" y="133.7" width="7" height="5.5" fill="#6c6c6c"/>
<path d="M948.6 133.7 L948.6 131.4 A2.4 2.4 0 0 1 953.4 131.4 L953.4 132.3" fill="none" stroke="#6c6c6c" stroke-width="1.1" opacity="0.85"/>
<rect x="959.4" y="129.6" width="9.2" height="9.5" rx="1.6" fill="url(#cbx)" stroke="#5f5f86" stroke-width="0.8"/>
<path d="M961.4 133.7 L964 136.3 L969.3 128.5" fill="none" stroke="#141c2c" stroke-width="1.9"/>
<text x="811.7" y="150.4" font-family="Liberation Sans" font-size="9.5"  fill="#202020" stroke="#202020" stroke-width="0.2" textLength="74.4" lengthAdjust="spacingAndGlyphs">Text (Boundaries)</text>
<rect x="947" y="147.5" width="7" height="5.5" fill="#6c6c6c"/>
<path d="M948.6 147.5 L948.6 145.2 A2.4 2.4 0 0 1 953.4 145.2 L953.4 146.1" fill="none" stroke="#6c6c6c" stroke-width="1.1" opacity="0.85"/>
<rect x="959.4" y="143.4" width="9.2" height="9.5" rx="1.6" fill="url(#cbx)" stroke="#5f5f86" stroke-width="0.8"/>
<path d="M961.4 147.5 L964 150.1 L969.3 142.3" fill="none" stroke="#141c2c" stroke-width="1.9"/>
<text x="811.7" y="164.2" font-family="Liberation Sans" font-size="9.5"  fill="#202020" stroke="#202020" stroke-width="0.2" textLength="27.2" lengthAdjust="spacingAndGlyphs">Ellipse</text>
<rect x="947" y="161.3" width="7" height="5.5" fill="#6c6c6c"/>
<path d="M948.6 161.3 L948.6 159.0 A2.4 2.4 0 0 1 953.4 159.0 L953.4 159.9" fill="none" stroke="#6c6c6c" stroke-width="1.1" opacity="0.85"/>
<rect x="959.4" y="157.2" width="9.2" height="9.5" rx="1.6" fill="url(#cbx)" stroke="#5f5f86" stroke-width="0.8"/>
<path d="M961.4 161.3 L964 163.9 L969.3 156.1" fill="none" stroke="#141c2c" stroke-width="1.9"/>
<rect x="798" y="168.2" width="180" height="13.6" fill="url(#selrow)"/>
<rect x="798" y="168.2" width="180" height="0.8" fill="#4a86d0"/>
<text x="811.7" y="178.0" font-family="Liberation Sans" font-size="9.5" font-weight="bold" fill="#fff" stroke="#fff" stroke-width="0.2" textLength="28.3" lengthAdjust="spacingAndGlyphs">Ellipse</text>
<rect x="947" y="175.1" width="7" height="5.5" fill="#ffffff"/>
<path d="M948.6 175.1 L948.6 172.8 A2.4 2.4 0 0 1 953.4 172.8 L953.4 173.7" fill="none" stroke="#ffffff" stroke-width="1.1" opacity="0.85"/>
<rect x="959.4" y="171.0" width="9.2" height="9.5" rx="1.6" fill="url(#cbx)" stroke="#5f5f86" stroke-width="0.8"/>
<path d="M961.4 175.1 L964 177.7 L969.3 169.9" fill="none" stroke="#141c2c" stroke-width="1.9"/>
<text x="811.7" y="191.8" font-family="Liberation Sans" font-size="9.5"  fill="#202020" stroke="#202020" stroke-width="0.2" textLength="27.2" lengthAdjust="spacingAndGlyphs">Ellipse</text>
<rect x="947" y="188.9" width="7" height="5.5" fill="#6c6c6c"/>
<path d="M948.6 188.9 L948.6 186.6 A2.4 2.4 0 0 1 953.4 186.6 L953.4 187.5" fill="none" stroke="#6c6c6c" stroke-width="1.1" opacity="0.85"/>
<rect x="959.4" y="184.8" width="9.2" height="9.5" rx="1.6" fill="url(#cbx)" stroke="#5f5f86" stroke-width="0.8"/>
<path d="M961.4 188.9 L964 191.5 L969.3 183.7" fill="none" stroke="#141c2c" stroke-width="1.9"/>
<text x="811.7" y="205.6" font-family="Liberation Sans" font-size="9.5"  fill="#202020" stroke="#202020" stroke-width="0.2" textLength="27.2" lengthAdjust="spacingAndGlyphs">Ellipse</text>
<rect x="947" y="202.7" width="7" height="5.5" fill="#6c6c6c"/>
<path d="M948.6 202.7 L948.6 200.4 A2.4 2.4 0 0 1 953.4 200.4 L953.4 201.3" fill="none" stroke="#6c6c6c" stroke-width="1.1" opacity="0.85"/>
<rect x="959.4" y="198.6" width="9.2" height="9.5" rx="1.6" fill="url(#cbx)" stroke="#5f5f86" stroke-width="0.8"/>
<path d="M961.4 202.7 L964 205.3 L969.3 197.5" fill="none" stroke="#141c2c" stroke-width="1.9"/>
<text x="811.7" y="219.4" font-family="Liberation Sans" font-size="9.5"  fill="#202020" stroke="#202020" stroke-width="0.2" textLength="27.2" lengthAdjust="spacingAndGlyphs">Ellipse</text>
<rect x="947" y="216.5" width="7" height="5.5" fill="#6c6c6c"/>
<path d="M948.6 216.5 L948.6 214.2 A2.4 2.4 0 0 1 953.4 214.2 L953.4 215.1" fill="none" stroke="#6c6c6c" stroke-width="1.1" opacity="0.85"/>
<rect x="959.4" y="212.4" width="9.2" height="9.5" rx="1.6" fill="url(#cbx)" stroke="#5f5f86" stroke-width="0.8"/>
<path d="M961.4 216.5 L964 219.1 L969.3 211.3" fill="none" stroke="#141c2c" stroke-width="1.9"/>
<text x="811.7" y="233.2" font-family="Liberation Sans" font-size="9.5"  fill="#202020" stroke="#202020" stroke-width="0.2" textLength="16.6" lengthAdjust="spacingAndGlyphs">Line</text>
<rect x="947" y="230.3" width="7" height="5.5" fill="#6c6c6c"/>
<path d="M948.6 230.3 L948.6 228.0 A2.4 2.4 0 0 1 953.4 228.0 L953.4 228.9" fill="none" stroke="#6c6c6c" stroke-width="1.1" opacity="0.85"/>
<rect x="959.4" y="226.2" width="9.2" height="9.5" rx="1.6" fill="url(#cbx)" stroke="#5f5f86" stroke-width="0.8"/>
<path d="M961.4 230.3 L964 232.9 L969.3 225.1" fill="none" stroke="#141c2c" stroke-width="1.9"/>
<text x="811.7" y="247.0" font-family="Liberation Sans" font-size="9.5"  fill="#202020" stroke="#202020" stroke-width="0.2" textLength="16.6" lengthAdjust="spacingAndGlyphs">Line</text>
<rect x="947" y="244.1" width="7" height="5.5" fill="#6c6c6c"/>
<path d="M948.6 244.1 L948.6 241.8 A2.4 2.4 0 0 1 953.4 241.8 L953.4 242.7" fill="none" stroke="#6c6c6c" stroke-width="1.1" opacity="0.85"/>
<rect x="959.4" y="240.0" width="9.2" height="9.5" rx="1.6" fill="url(#cbx)" stroke="#5f5f86" stroke-width="0.8"/>
<path d="M961.4 244.1 L964 246.7 L969.3 238.9" fill="none" stroke="#141c2c" stroke-width="1.9"/>
</g>
<rect x="798" y="237.6" width="180" height="14.4" fill="url(#hdr)"/><rect x="798" y="237.6" width="180" height="0.9" fill="#9a9a9a"/><rect x="798" y="251.1" width="180" height="0.9" fill="#a4a4a4"/><polygon points="799.6,242.2 806.4,242.2 803,247.6" fill="#7a7a7a"/><text x="809.5" y="248.2" font-family="Liberation Sans" font-size="9.5" font-weight="bold" fill="#1a1a1a" textLength="34.3" lengthAdjust="spacingAndGlyphs">Opacity</text>
<rect x="798" y="284.3" width="180" height="13.7" fill="url(#hdr)"/><rect x="798" y="284.3" width="180" height="0.9" fill="#9a9a9a"/><rect x="798" y="297.1" width="180" height="0.9" fill="#a4a4a4"/><polygon points="799.6,288.9 806.4,288.9 803,294.3" fill="#7a7a7a"/><text x="809.5" y="294.9" font-family="Liberation Sans" font-size="9.5" font-weight="bold" fill="#1a1a1a" textLength="44.5" lengthAdjust="spacingAndGlyphs">Geometry</text>
<rect x="798" y="374.3" width="180" height="13.7" fill="url(#hdr)"/><rect x="798" y="374.3" width="180" height="0.9" fill="#9a9a9a"/><rect x="798" y="387.1" width="180" height="0.9" fill="#a4a4a4"/><polygon points="799.6,378.9 806.4,378.9 803,384.3" fill="#7a7a7a"/><text x="809.5" y="384.9" font-family="Liberation Sans" font-size="9.5" font-weight="bold" fill="#1a1a1a" textLength="13.5" lengthAdjust="spacingAndGlyphs">Fill</text>
<rect x="798" y="501.5" width="180" height="13.8" fill="url(#hdr)"/><rect x="798" y="501.5" width="180" height="0.9" fill="#9a9a9a"/><rect x="798" y="514.4" width="180" height="0.9" fill="#a4a4a4"/><polygon points="799.6,506.1 806.4,506.1 803,511.5" fill="#7a7a7a"/><text x="809.5" y="512.1" font-family="Liberation Sans" font-size="9.5" font-weight="bold" fill="#1a1a1a" textLength="30.5" lengthAdjust="spacingAndGlyphs">Stroke</text>
<rect x="798" y="603.2" width="180" height="13.8" fill="url(#hdr)"/><rect x="798" y="603.2" width="180" height="0.9" fill="#9a9a9a"/><rect x="798" y="616.1" width="180" height="0.9" fill="#a4a4a4"/><polygon points="799.6,607.8 806.4,607.8 803,613.2" fill="#7a7a7a"/><text x="809.5" y="613.8" font-family="Liberation Sans" font-size="9.5" font-weight="bold" fill="#1a1a1a" textLength="23" lengthAdjust="spacingAndGlyphs">Text</text>
<rect x="805" y="268.4" width="88.5" height="4.5" rx="2.2" fill="url(#trk)" stroke="#8a8a8a" stroke-width="0.7"/>
<rect x="809.1" y="262" width="0.9" height="2.7" fill="#777"/>
<rect x="828.9" y="262" width="0.9" height="2.7" fill="#777"/>
<rect x="848.8" y="262" width="0.9" height="2.7" fill="#777"/>
<rect x="868.6" y="262" width="0.9" height="2.7" fill="#777"/>
<rect x="888.6" y="262" width="0.9" height="2.7" fill="#777"/>
<path d="M884.6 274.6 L884.6 267 L889.2 262.2 L893.8 267 L893.8 274.6 Z" fill="url(#btn)" stroke="#8a8a8a" stroke-width="0.8"/>
<rect x="901.7" y="260.7" width="47.3" height="14.4" fill="#fff" stroke="#b4b4b4" stroke-width="1"/><rect x="902.2" y="260.7" width="46.3" height="0.8" fill="#8e8e8e"/><text x="945.9" y="271.9" font-family="Liberation Sans" font-size="9.7" text-anchor="end" fill="#1a1a1a" stroke="#1a1a1a" stroke-width="0.2">100%</text>
<rect x="954.7" y="260.4" width="7.6" height="14.2" rx="4" fill="url(#btn)" stroke="#8c8c8c" stroke-width="0.8"/><polygon points="957.0,265.5 960.0,265.5 958.5,263.2" fill="#222"/><polygon points="957.0,269.5 960.0,269.5 958.5,271.8" fill="#222"/>
<text x="805.8" y="317.6" font-family="Liberation Sans" font-size="9.6" fill="#1e1e1e" stroke="#1e1e1e" stroke-width="0.2" text-anchor="start" textLength="8.2" lengthAdjust="spacingAndGlyphs">X:</text>
<rect x="819.9" y="307.0" width="47.2" height="14.3" fill="#fff" stroke="#b4b4b4" stroke-width="1"/><rect x="820.4" y="307.0" width="46.2" height="0.8" fill="#8e8e8e"/><text x="864.0" y="318.1" font-family="Liberation Sans" font-size="9.7" text-anchor="end" fill="#1a1a1a" stroke="#1a1a1a" stroke-width="0.2">450</text>
<rect x="872.7" y="306.7" width="7.7" height="14.5" rx="4" fill="url(#btn)" stroke="#8c8c8c" stroke-width="0.8"/><polygon points="875.0,312.0 878.0,312.0 876.5,309.7" fill="#222"/><polygon points="875.0,316.0 878.0,316.0 876.5,318.3" fill="#222"/>
<text x="888" y="317.6" font-family="Liberation Sans" font-size="9.6" fill="#1e1e1e" stroke="#1e1e1e" stroke-width="0.2" text-anchor="start" textLength="8" lengthAdjust="spacingAndGlyphs">Y:</text>
<rect x="901.7" y="307.0" width="47.3" height="14.3" fill="#fff" stroke="#b4b4b4" stroke-width="1"/><rect x="902.2" y="307.0" width="46.3" height="0.8" fill="#8e8e8e"/><text x="945.9" y="318.1" font-family="Liberation Sans" font-size="9.7" text-anchor="end" fill="#1a1a1a" stroke="#1a1a1a" stroke-width="0.2">178</text>
<rect x="954.7" y="306.7" width="7.6" height="14.5" rx="4" fill="url(#btn)" stroke="#8c8c8c" stroke-width="0.8"/><polygon points="957.0,312.0 960.0,312.0 958.5,309.7" fill="#222"/><polygon points="957.0,316.0 960.0,316.0 958.5,318.3" fill="#222"/>
<text x="804" y="339.6" font-family="Liberation Sans" font-size="9.6" fill="#1e1e1e" stroke="#1e1e1e" stroke-width="0.2" text-anchor="start" textLength="10" lengthAdjust="spacingAndGlyphs">W:</text>
<rect x="819.9" y="329.1" width="47.2" height="14.2" fill="#fff" stroke="#b4b4b4" stroke-width="1"/><rect x="820.4" y="329.1" width="46.2" height="0.8" fill="#8e8e8e"/><text x="864.0" y="340.1" font-family="Liberation Sans" font-size="9.7" text-anchor="end" fill="#1a1a1a" stroke="#1a1a1a" stroke-width="0.2">124</text>
<rect x="872.7" y="328.9" width="7.7" height="14.3" rx="4" fill="url(#btn)" stroke="#8c8c8c" stroke-width="0.8"/><polygon points="875.0,334.1 878.0,334.1 876.5,331.8" fill="#222"/><polygon points="875.0,338.1 878.0,338.1 876.5,340.4" fill="#222"/>
<text x="887" y="339.6" font-family="Liberation Sans" font-size="9.6" fill="#1e1e1e" stroke="#1e1e1e" stroke-width="0.2" text-anchor="start" textLength="9" lengthAdjust="spacingAndGlyphs">H:</text>
<rect x="901.7" y="329.1" width="47.3" height="14.2" fill="#fff" stroke="#b4b4b4" stroke-width="1"/><rect x="902.2" y="329.1" width="46.3" height="0.8" fill="#8e8e8e"/><text x="945.9" y="340.1" font-family="Liberation Sans" font-size="9.7" text-anchor="end" fill="#1a1a1a" stroke="#1a1a1a" stroke-width="0.2">124</text>
<rect x="954.7" y="328.9" width="7.6" height="14.3" rx="4" fill="url(#btn)" stroke="#8c8c8c" stroke-width="0.8"/><polygon points="957.0,334.1 960.0,334.1 958.5,331.8" fill="#222"/><polygon points="957.0,338.1 960.0,338.1 958.5,340.4" fill="#222"/>
<text x="828.4" y="361.4" font-family="Liberation Sans" font-size="9.6" fill="#1e1e1e" stroke="#1e1e1e" stroke-width="0.2" text-anchor="start" textLength="39" lengthAdjust="spacingAndGlyphs">Rotation:</text>
<circle cx="883.8" cy="358.2" r="9.6" fill="url(#knob)" stroke="#8a8a8a" stroke-width="0.8"/><circle cx="883.8" cy="350.9" r="1.1" fill="#555"/>
<rect x="901.7" y="350.9" width="47.3" height="14.1" fill="#fff" stroke="#b4b4b4" stroke-width="1"/><rect x="902.2" y="350.9" width="46.3" height="0.8" fill="#8e8e8e"/><text x="945.9" y="361.8" font-family="Liberation Sans" font-size="9.7" text-anchor="end" fill="#1a1a1a" stroke="#1a1a1a" stroke-width="0.2">0</text>
<rect x="954.7" y="350.7" width="7.6" height="14.3" rx="4" fill="url(#btn)" stroke="#8c8c8c" stroke-width="0.8"/><polygon points="957.0,355.9 960.0,355.9 958.5,353.6" fill="#222"/><polygon points="957.0,359.9 960.0,359.9 958.5,362.2" fill="#222"/>
<rect x="804.6" y="397" width="157.6" height="13" rx="3.5" fill="url(#btn)" stroke="#949494" stroke-width="0.8"/>
<text x="812" y="407.2" font-family="Liberation Sans" font-size="9.6" fill="#1e1e1e" stroke="#1e1e1e" stroke-width="0.2" text-anchor="start" textLength="21.5" lengthAdjust="spacingAndGlyphs">None</text>
<polygon points="953.6,402.3 957,402.3 955.3,399.6" fill="#222"/><polygon points="953.6,404.7 957,404.7 955.3,407.4" fill="#222"/>
<rect x="804.6" y="419.5" width="21" height="18.4" fill="#eeeeee" stroke="#c6c6c6" stroke-width="0.8"/>
<rect x="830.6" y="419.5" width="21" height="18.4" fill="#eeeeee" stroke="#c6c6c6" stroke-width="0.8"/>
<rect x="856.8" y="419.5" width="21" height="18.4" fill="#eeeeee" stroke="#c6c6c6" stroke-width="0.8"/>
<circle cx="894.1" cy="428.5" r="9.9" fill="url(#knob)" stroke="#8a8a8a" stroke-width="0.8"/><circle cx="894.1" cy="420.9" r="1.1" fill="#555"/>
<rect x="911.8" y="421.5" width="35.3" height="13.8" fill="#fff" stroke="#b4b4b4" stroke-width="1"/><rect x="912.3" y="421.5" width="34.3" height="0.8" fill="#8e8e8e"/><text x="944.0" y="432.1" font-family="Liberation Sans" font-size="9.7" text-anchor="end" fill="#1a1a1a" stroke="#1a1a1a" stroke-width="0.2">0</text>
<rect x="954.4" y="421.4" width="7.8" height="14.0" rx="4" fill="url(#btn)" stroke="#8c8c8c" stroke-width="0.8"/><polygon points="956.8,426.4 959.8,426.4 958.3,424.1" fill="#222"/><polygon points="956.8,430.4 959.8,430.4 958.3,432.7" fill="#222"/>
<rect x="804" y="444.2" width="158.6" height="1" fill="#b0b0b0"/>
<rect x="824.6" y="456.2" width="9.6" height="9.2" rx="1.6" fill="url(#cbx)" stroke="#5f6f96" stroke-width="0.8"/>
<path d="M826.4 460.2 L829 463.2 L834.6 454.6" fill="none" stroke="#141c2c" stroke-width="1.9"/>
<text x="838" y="463.6" font-family="Liberation Sans" font-size="9.6" fill="#1e1e1e" stroke="#1e1e1e" stroke-width="0.2" text-anchor="start" textLength="33.6" lengthAdjust="spacingAndGlyphs">Shadow</text>
<rect x="883.4" y="451" width="21.4" height="18.6" fill="#f4f4f4" stroke="#8e8e8e" stroke-width="0.8"/>
<rect x="885.7" y="453.7" width="16.5" height="13.3" fill="#000"/>
<rect x="911.8" y="452.9" width="35.3" height="14.2" fill="#fff" stroke="#b4b4b4" stroke-width="1"/><rect x="912.3" y="452.9" width="34.3" height="0.8" fill="#8e8e8e"/><text x="944.0" y="463.9" font-family="Liberation Sans" font-size="9.7" text-anchor="end" fill="#1a1a1a" stroke="#1a1a1a" stroke-width="0.2">3</text>
<rect x="954.4" y="452.8" width="7.8" height="14.4" rx="4" fill="url(#btn)" stroke="#8c8c8c" stroke-width="0.8"/><polygon points="956.8,458.0 959.8,458.0 958.3,455.7" fill="#222"/><polygon points="956.8,462.0 959.8,462.0 958.3,464.3" fill="#222"/>
<text x="823.8" y="487.6" font-family="Liberation Sans" font-size="9.6" fill="#1e1e1e" stroke="#1e1e1e" stroke-width="0.2" text-anchor="start" textLength="8.4" lengthAdjust="spacingAndGlyphs">X:</text>
<rect x="838.9" y="477.3" width="36.8" height="13.8" fill="#fff" stroke="#b4b4b4" stroke-width="1"/><rect x="839.4" y="477.3" width="35.8" height="0.8" fill="#8e8e8e"/><text x="872.6" y="487.9" font-family="Liberation Sans" font-size="9.7" text-anchor="end" fill="#1a1a1a" stroke="#1a1a1a" stroke-width="0.2">2</text>
<rect x="883.9" y="477.2" width="7.3" height="14.0" rx="4" fill="url(#btn)" stroke="#8c8c8c" stroke-width="0.8"/><polygon points="886.0,482.2 889.0,482.2 887.5,479.9" fill="#222"/><polygon points="886.0,486.2 889.0,486.2 887.5,488.5" fill="#222"/>
<text x="896.7" y="487.6" font-family="Liberation Sans" font-size="9.6" fill="#1e1e1e" stroke="#1e1e1e" stroke-width="0.2" text-anchor="start" textLength="8.6" lengthAdjust="spacingAndGlyphs">Y:</text>
<rect x="911.8" y="477.3" width="35.3" height="13.8" fill="#fff" stroke="#b4b4b4" stroke-width="1"/><rect x="912.3" y="477.3" width="34.3" height="0.8" fill="#8e8e8e"/><text x="944.0" y="487.9" font-family="Liberation Sans" font-size="9.7" text-anchor="end" fill="#1a1a1a" stroke="#1a1a1a" stroke-width="0.2">–2</text>
<rect x="954.4" y="477.2" width="7.8" height="14.0" rx="4" fill="url(#btn)" stroke="#8c8c8c" stroke-width="0.8"/><polygon points="956.8,482.2 959.8,482.2 958.3,479.9" fill="#222"/><polygon points="956.8,486.2 959.8,486.2 958.3,488.5" fill="#222"/>
<rect x="804.5" y="525.8" width="71.6" height="13.8" rx="3.5" fill="url(#btn)" stroke="#949494" stroke-width="0.8"/>
<text x="811.5" y="536.2" font-family="Liberation Sans" font-size="9.6" fill="#1e1e1e" stroke="#1e1e1e" stroke-width="0.2" text-anchor="start" textLength="19.6" lengthAdjust="spacingAndGlyphs">Solid</text>
<polygon points="866.3,531 869.7,531 868,528.3" fill="#222"/><polygon points="866.3,533.4 869.7,533.4 868,536.1" fill="#222"/>
<rect x="883.2" y="523.5" width="21.4" height="18.6" fill="#f4f4f4" stroke="#8e8e8e" stroke-width="0.8"/>
<rect x="885.6" y="526" width="16.6" height="13.4" fill="#7a777a" stroke="#5a5a5a" stroke-width="0.5"/>
<rect x="911.9" y="525.0" width="35.3" height="14.2" fill="#fff" stroke="#b4b4b4" stroke-width="1"/><rect x="912.4" y="525.0" width="34.3" height="0.8" fill="#8e8e8e"/><text x="944.1" y="536.0" font-family="Liberation Sans" font-size="9.7" text-anchor="end" fill="#1a1a1a" stroke="#1a1a1a" stroke-width="0.2">5</text>
<rect x="954.7" y="524.9" width="7.6" height="14.4" rx="4" fill="url(#btn)" stroke="#8c8c8c" stroke-width="0.8"/><polygon points="957.0,530.1 960.0,530.1 958.5,527.8" fill="#222"/><polygon points="957.0,534.1 960.0,534.1 958.5,536.4" fill="#222"/>
<rect x="804" y="546" width="158.6" height="1" fill="#b0b0b0"/>
<rect x="824.8" y="558.8" width="9.2" height="8.6" rx="1.6" fill="#f6f6f6" stroke="#a0a0a0" stroke-width="0.8"/>
<text x="838.4" y="566.4" font-family="Liberation Sans" font-size="9.6" fill="#1e1e1e" stroke="#1e1e1e" stroke-width="0.2" text-anchor="start" textLength="33.6" lengthAdjust="spacingAndGlyphs">Shadow</text>
<rect x="883.2" y="553.4" width="21.4" height="18.6" fill="#ececec" stroke="#c2c2c2" stroke-width="0.8"/>
<rect x="911.9" y="555.0" width="35.3" height="14.1" fill="#fff" stroke="#b4b4b4" stroke-width="1"/><rect x="912.4" y="555.0" width="34.3" height="0.8" fill="#8e8e8e"/><text x="944.1" y="565.9" font-family="Liberation Sans" font-size="9.7" text-anchor="end" fill="#1a1a1a" stroke="#1a1a1a" stroke-width="0.2">5</text>
<rect x="954.7" y="554.9" width="7.6" height="14.3" rx="4" fill="url(#btn)" stroke="#8c8c8c" stroke-width="0.8"/><polygon points="957.0,560.0 960.0,560.0 958.5,557.8" fill="#222"/><polygon points="957.0,564.0 960.0,564.0 958.5,566.3" fill="#222"/>
<text x="823.8" y="590" font-family="Liberation Sans" font-size="9.6" fill="#1e1e1e" stroke="#1e1e1e" stroke-width="0.2" text-anchor="start" textLength="8.4" lengthAdjust="spacingAndGlyphs">X:</text>
<rect x="838.9" y="579.2" width="37.0" height="14.3" fill="#fff" stroke="#b4b4b4" stroke-width="1"/><rect x="839.4" y="579.2" width="36.0" height="0.8" fill="#8e8e8e"/><text x="872.8" y="590.3" font-family="Liberation Sans" font-size="9.7" text-anchor="end" fill="#1a1a1a" stroke="#1a1a1a" stroke-width="0.2">2</text>
<rect x="884.0" y="579.1" width="7.4" height="14.5" rx="4" fill="url(#btn)" stroke="#8c8c8c" stroke-width="0.8"/><polygon points="886.2,584.4 889.2,584.4 887.7,582.1" fill="#222"/><polygon points="886.2,588.4 889.2,588.4 887.7,590.6" fill="#222"/>
<text x="896.7" y="590" font-family="Liberation Sans" font-size="9.6" fill="#1e1e1e" stroke="#1e1e1e" stroke-width="0.2" text-anchor="start" textLength="8.6" lengthAdjust="spacingAndGlyphs">Y:</text>
<rect x="911.9" y="579.2" width="35.3" height="14.3" fill="#fff" stroke="#b4b4b4" stroke-width="1"/><rect x="912.4" y="579.2" width="34.3" height="0.8" fill="#8e8e8e"/><text x="944.1" y="590.3" font-family="Liberation Sans" font-size="9.7" text-anchor="end" fill="#1a1a1a" stroke="#1a1a1a" stroke-width="0.2">–2</text>
<rect x="954.7" y="579.1" width="7.6" height="14.5" rx="4" fill="url(#btn)" stroke="#8c8c8c" stroke-width="0.8"/><polygon points="957.0,584.4 960.0,584.4 958.5,582.1" fill="#222"/><polygon points="957.0,588.4 960.0,588.4 958.5,590.6" fill="#222"/>
<rect x="804.5" y="625.5" width="99" height="10" rx="3.5" fill="url(#btn)" stroke="#949494" stroke-width="0.8"/>
<rect x="913.8" y="624.8" width="20.5" height="10" fill="url(#btn)" stroke="#949494" stroke-width="0.8"/>
<rect x="940.5" y="624.8" width="21.2" height="10" fill="url(#btn)" stroke="#949494" stroke-width="0.8"/>
<circle cx="951" cy="631" r="4" fill="#8ad060" opacity="0.7"/>
<rect x="46" y="630" width="932" height="15.8" rx="3" fill="url(#stb)"/><rect x="46" y="630" width="932" height="8" fill="url(#stb)"/>
<rect x="46" y="629.6" width="932" height="0.9" fill="#8f8f8f"/>
<rect x="138.7" y="630.5" width="0.9" height="15" fill="#9a9a9a"/><rect x="139.6" y="630.5" width="0.7" height="15" fill="#dadada"/>
<rect x="847.0" y="630.5" width="0.9" height="15" fill="#9a9a9a"/><rect x="847.9" y="630.5" width="0.7" height="15" fill="#dadada"/>
<rect x="909.9" y="630.5" width="0.9" height="15" fill="#9a9a9a"/><rect x="910.8" y="630.5" width="0.7" height="15" fill="#dadada"/>
<text x="54.6" y="640.6" font-family="Liberation Sans" font-size="8.6" fill="#1a1a1a" stroke="#1a1a1a" stroke-width="0.2" textLength="65.4" lengthAdjust="spacingAndGlyphs">Canvas: 660 x 480</text>
<rect x="853.9" y="634.6" width="8" height="7.3" rx="1.2" fill="url(#cbx)" stroke="#5f6f96" stroke-width="0.7"/>
<path d="M855.3 637.6 L857.6 640.3 L862.6 633" fill="none" stroke="#141c2c" stroke-width="1.6"/>
<text x="864.6" y="640.4" font-family="Liberation Sans" font-size="9" fill="#1a1a1a" stroke="#1a1a1a" stroke-width="0.2" textLength="16.4" lengthAdjust="spacingAndGlyphs">Grid:</text>
<text x="885.8" y="640.4" font-family="Liberation Sans" font-size="9" fill="#1a1a1a" stroke="#1a1a1a" stroke-width="0.2" textLength="8.2" lengthAdjust="spacingAndGlyphs">10</text>
<polygon points="897.6,637.6 901.8,637.6 899.7,634.4" fill="#333"/><polygon points="897.6,639 901.8,639 899.7,642.2" fill="#333"/>
<text x="917.2" y="640.4" font-family="Liberation Sans" font-size="9" fill="#1a1a1a" stroke="#1a1a1a" stroke-width="0.2" textLength="22.6" lengthAdjust="spacingAndGlyphs">Zoom:</text>
<text x="943.9" y="640.4" font-family="Liberation Sans" font-size="9" fill="#1a1a1a" stroke="#1a1a1a" stroke-width="0.2" textLength="18.5" lengthAdjust="spacingAndGlyphs">100%</text>
<polygon points="965.8,637.6 970,637.6 967.9,634.4" fill="#333"/><polygon points="965.8,639 970,639 967.9,642.2" fill="#333"/>
</svg>

</body></html>
